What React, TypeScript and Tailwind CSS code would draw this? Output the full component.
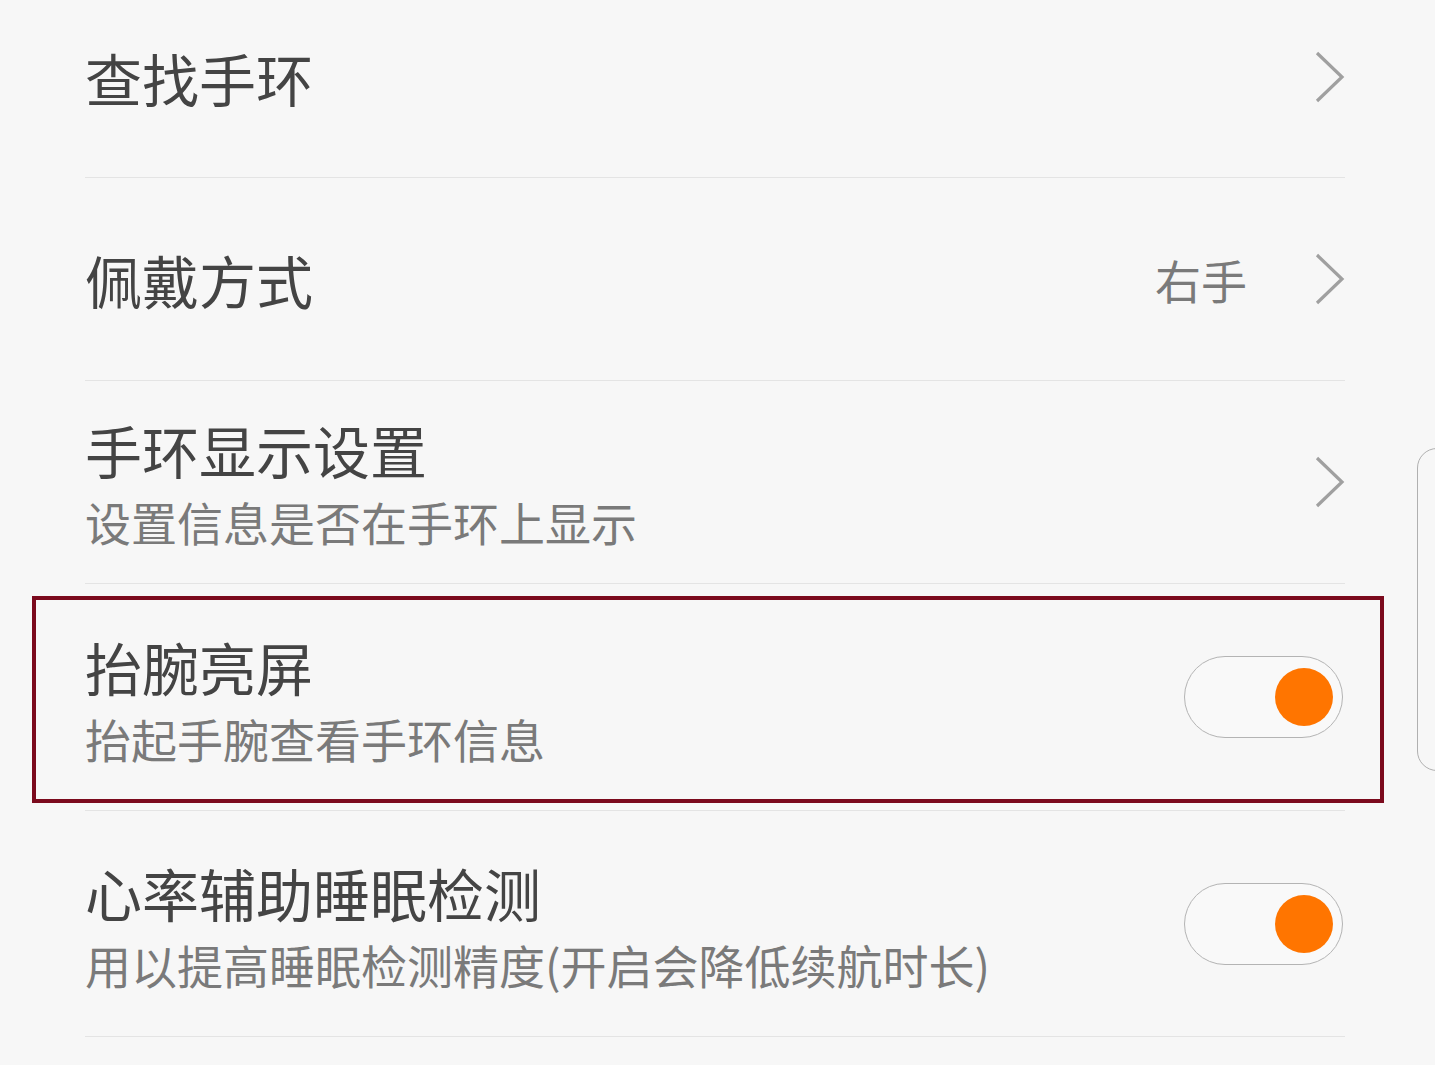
import {FC} from 'react';

const font = {fontFamily: '"Noto Sans CJK SC", "Noto Sans", sans-serif'};

const Chevron: FC = () => (
  <svg width="30" height="52" viewBox="0 0 30 52" className="shrink-0">
    <polyline points="2,2 27,26 2,50" fill="none" stroke="#a0a0a0" strokeWidth="3.2" />
  </svg>
);

const Toggle: FC = () => (
  <div className="w-[159px] h-[82px] mr-[2px] rounded-full border-[1.5px] border-[#b4b4b4] bg-[#f9f9f9] flex items-center justify-end pr-[9px] shrink-0">
    <div className="w-[58px] h-[58px] rounded-full bg-[#ff7500]" />
  </div>
);

type RowProps = {
  title: string;
  sub?: string;
  value?: string;
  toggle?: boolean;
  h: string;
  shift?: string;
};

const Row: FC<RowProps> = ({title, sub, value, toggle, h, shift = ''}) => (
  <div className={`flex items-center justify-between border-b border-[#e4e4e4] ${h}`}>
    <div className={`flex flex-col ${shift}`}>
      <div className="text-[57px] leading-[72px] text-[#444]">{title}</div>
      {sub && <div className="text-[46px] leading-[72px] text-[#7a7a7a]">{sub}</div>}
    </div>
    <div className="flex items-center">
      {value && <span className="text-[46px] text-[#7a7a7a] mr-[68px]">{value}</span>}
      {toggle ? <Toggle /> : <Chevron />}
    </div>
  </div>
);

export default function App() {
  return (
    <div className="relative w-[1435px] h-[1065px] overflow-hidden bg-[#f7f7f7]" style={font}>
      <div className="mx-[85px] pr-[5px]">
        <div className="flex items-center justify-between border-b border-[#e4e4e4] h-[178px] pb-[24px]">
          <div className="text-[57px] leading-[72px] text-[#444]">查找手环</div>
          <Chevron />
        </div>
        <Row h="h-[203px]" title="佩戴方式" value="右手" />
        <Row h="h-[203px]" title="手环显示设置" sub="设置信息是否在手环上显示" shift="pt-[6px]" />
        <Row h="h-[227px]" title="抬腕亮屏" sub="抬起手腕查看手环信息" toggle shift="pt-[10px]" />
        <Row h="h-[226px]" title="心率辅助睡眠检测" sub="用以提高睡眠检测精度(开启会降低续航时长)" toggle shift="pt-[8px]" />
      </div>

      {/* highlight frame */}
      <div className="absolute left-[32px] top-[596px] w-[1352px] h-[207px] border-[4px] border-[#7b0a1d] pointer-events-none" />

      {/* edge handle */}
      <div className="absolute left-[1417px] top-[448px] w-[40px] h-[323px] rounded-[22px] border-[1.5px] border-[#b0b0b0]" />
    </div>
  );
}
